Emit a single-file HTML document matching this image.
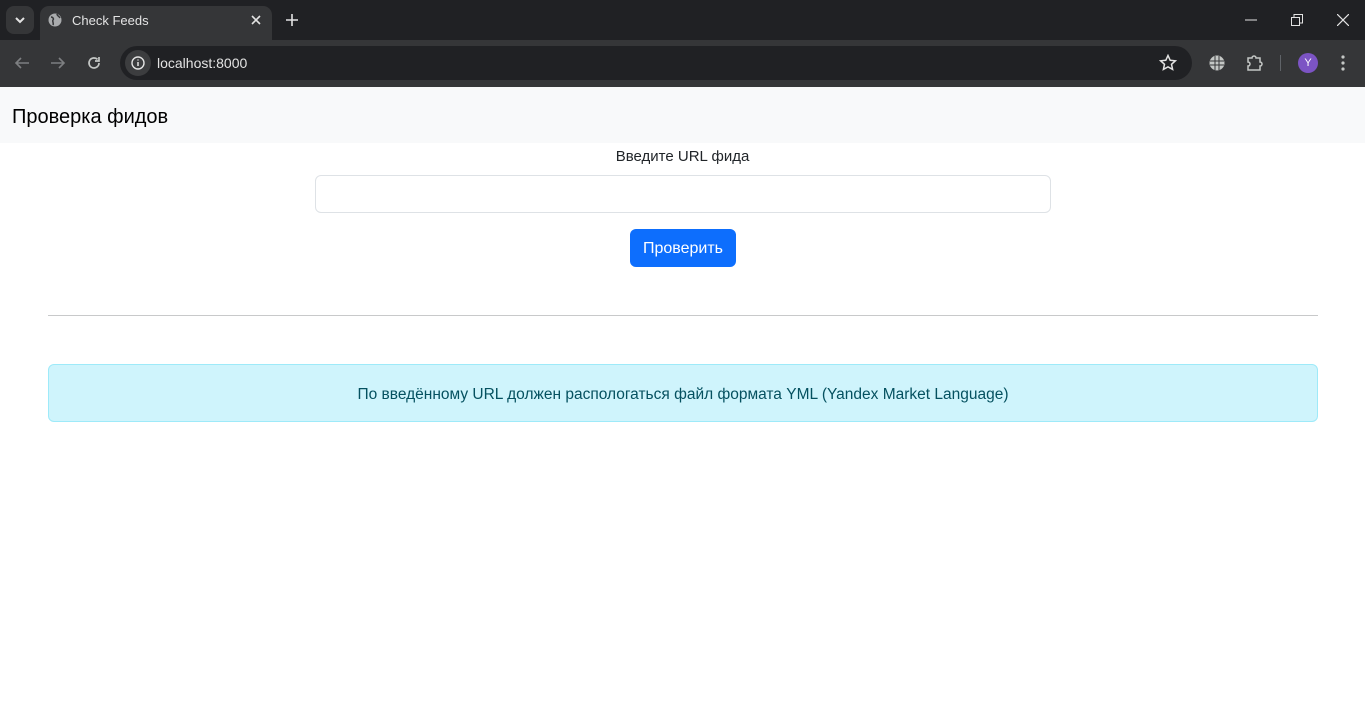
<!DOCTYPE html>
<html><head><meta charset="utf-8"><style>
*{box-sizing:border-box;margin:0;padding:0}
body{width:1365px;height:728px;overflow:hidden;background:#fff;font-family:"Liberation Sans","DejaVu Sans",sans-serif;position:relative}
.abs{position:absolute}
#top{left:0;top:0;width:1365px;height:40px;background:#202124}
#bar{left:0;top:40px;width:1365px;height:47px;background:#353638}
#tab{left:40px;top:6px;width:232px;height:34px;background:#353638;border-radius:9px 9px 0 0}
#omni{left:120px;top:46px;width:1072px;height:34px;background:#202124;border-radius:17px}
</style></head><body>
<div id="top" class="abs"></div>
<div class="abs" style="left:6px;top:6px;width:28px;height:28px;background:#353638;border-radius:8px"></div>
<svg class="abs" style="left:14px;top:15px" width="12" height="10"><path d="M2 3l4 4 4-4" stroke="#e3e3e3" stroke-width="2" fill="none"/></svg>
<div id="tab" class="abs"></div>
<svg class="abs" style="left:48px;top:13px" width="14" height="14"><circle cx="7" cy="7" r="6.5" fill="#a9abad"/><path d="M3 4c2 0 3 2 2 3s1 3 0 5M9 1c0 2 2 2 3 4" stroke="#353638" stroke-width="1.5" fill="none"/></svg>
<div class="abs" style="left:72px;top:13px;font-size:13px;color:#e3e3e3">Check Feeds</div>
<svg class="abs" style="left:251px;top:15px" width="10" height="10"><path d="M1 1l8 8M9 1l-8 8" stroke="#e3e3e3" stroke-width="1.6"/></svg>
<svg class="abs" style="left:286px;top:14px" width="12" height="12"><path d="M6 0v12M0 6h12" stroke="#e3e3e3" stroke-width="1.6"/></svg>
<svg class="abs" style="left:1245px;top:19px" width="12" height="2"><path d="M0 1h12" stroke="#e3e3e3"/></svg>
<svg class="abs" style="left:1291px;top:14px" width="12" height="12"><rect x="0.5" y="3.5" width="8" height="8" stroke="#e3e3e3" fill="none"/><path d="M3 3V0.5h8.5V9H9" stroke="#e3e3e3" fill="none"/></svg>
<svg class="abs" style="left:1337px;top:14px" width="12" height="12"><path d="M0 0l12 12M12 0L0 12" stroke="#e3e3e3" stroke-width="1.2"/></svg>
<div id="bar" class="abs"></div>
<svg class="abs" style="left:14px;top:56px" width="16" height="14"><path d="M15 7H2M7 2L2 7l5 5" stroke="#7d7f81" stroke-width="1.6" fill="none"/></svg>
<svg class="abs" style="left:50px;top:56px" width="16" height="14"><path d="M1 7h13M9 2l5 5-5 5" stroke="#7d7f81" stroke-width="1.6" fill="none"/></svg>
<svg class="abs" style="left:86px;top:55px" width="16" height="16"><path d="M13 8a5 5 0 1 1-1.5-3.6M13 2v4H9" stroke="#c4c7c5" stroke-width="1.7" fill="none"/></svg>
<div id="omni" class="abs"></div>
<div class="abs" style="left:125px;top:50px;width:26px;height:26px;border-radius:13px;background:#3c3d3f"></div>
<svg class="abs" style="left:130px;top:55px" width="16" height="16"><circle cx="8" cy="8" r="6" stroke="#e3e3e3" stroke-width="1.4" fill="none"/><path d="M8 7v4M8 4.5v1" stroke="#e3e3e3" stroke-width="1.5"/></svg>
<div class="abs" style="left:157px;top:55px;font-size:14px;color:#e3e3e3">localhost:8000</div>
<svg class="abs" style="left:1159px;top:54px" width="18" height="18"><path d="M9 1.5l2.2 4.8 5.2.5-3.9 3.5 1.1 5.1L9 12.8l-4.6 2.6 1.1-5.1-3.9-3.5 5.2-.5z" stroke="#e3e3e3" stroke-width="1.5" fill="none"/></svg>
<svg class="abs" style="left:1209px;top:55px" width="16" height="16"><circle cx="8" cy="8" r="7.5" fill="#c4c7c5"/><path d="M1 6h14M1 10h14M6 1v14M10 1v14" stroke="#353638" stroke-width="1"/></svg>
<svg class="abs" style="left:1246px;top:54px" width="18" height="18"><path d="M2 4h4a2 2 0 0 1 4 0h4v4a2 2 0 0 1 0 4v4H2v-4a2 2 0 0 0 0-4z" stroke="#c4c7c5" stroke-width="1.5" fill="none"/></svg>
<div class="abs" style="left:1280px;top:55px;width:1px;height:16px;background:#5f6368"></div>
<div class="abs" style="left:1298px;top:53px;width:20px;height:20px;border-radius:10px;background:#7c54c4;color:#fff;font-size:11px;text-align:center;line-height:20px">Y</div>
<svg class="abs" style="left:1340px;top:54px" width="6" height="18"><circle cx="3" cy="3" r="1.6" fill="#c4c7c5"/><circle cx="3" cy="9" r="1.6" fill="#c4c7c5"/><circle cx="3" cy="15" r="1.6" fill="#c4c7c5"/></svg>

<div class="abs" style="left:0;top:87px;width:1365px;height:56px;background:#f8f9fa"></div>
<div class="abs" style="left:12px;top:106px;font-size:20px;color:#000">Проверка фидов</div>
<div class="abs" style="left:0;top:148px;width:1365px;text-align:center;font-size:15px;color:#212529">Введите URL фида</div>
<div class="abs" style="left:315px;top:175px;width:736px;height:38px;border:1px solid #dee2e6;border-radius:6px"></div>
<div class="abs" style="left:630px;top:229px;width:106px;height:38px;border-radius:6px;background:#0d6efd;color:#fff;font-size:16px;text-align:center;line-height:40px">Проверить</div>
<div class="abs" style="left:48px;top:315px;width:1270px;height:1px;background:#c8c9ca"></div>
<div class="abs" style="left:48px;top:364px;width:1270px;height:58px;background:#cff4fc;border:1px solid #9eeaf9;border-radius:6px;color:#055160;font-size:15.5px;text-align:center;line-height:60px">По введённому URL должен распологаться файл формата YML (Yandex Market Language)</div>
</body></html>
